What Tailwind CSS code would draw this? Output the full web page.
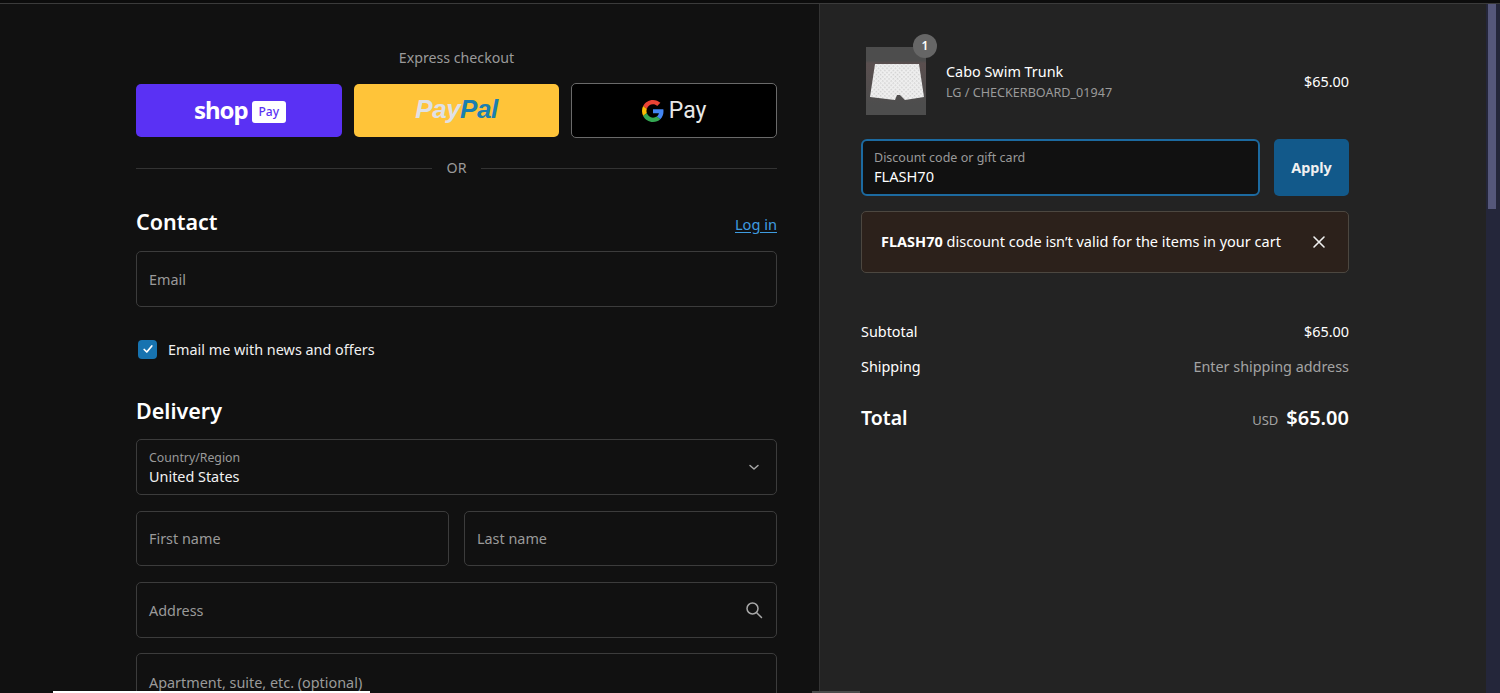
<!doctype html>
<html>
<head>
<meta charset="utf-8">
<script src="https://cdn.jsdelivr.net/npm/@tailwindcss/browser@4"></script>
</head>
<body class="bg-[#111111]">
<div class="relative h-[693px] w-[1500px] overflow-hidden font-['Noto_Sans','Open_Sans',sans-serif] text-[14.4px] text-white">
  <div class="h-1 border-b border-[#3b3b3b] bg-[#0c0c0c]"></div>
  <div class="flex h-[689px]">
    <main class="w-[820px] shrink-0 overflow-hidden border-r border-[#333333] bg-[#111111] pl-[136px] pr-[42px]">
      <p class="mt-[44px] h-5 text-center text-[14.2px] leading-5 text-[#9a9a9a]">Express checkout</p>
      <div class="mt-[15px] grid h-[55px] grid-cols-3 gap-3">
        <div class="my-px flex items-center justify-center gap-[4px] rounded-[5px] bg-[#5a31f4] pb-[1px] pl-[2px]">
          <span class="text-[24px] font-bold leading-none tracking-[-1px]">shop</span>
          <span class="mt-[3px] flex h-[22px] w-[34px] items-center justify-center rounded-[3px] bg-white text-[12px] font-medium text-[#5a31f4]">Pay</span>
        </div>
        <div class="my-px flex items-center justify-center rounded-[5px] bg-[#ffc439] pb-[3px] font-['Liberation_Sans',sans-serif] text-[26px] font-bold italic leading-none tracking-[-0.5px]">
          <span class="text-[#dfe1e6]">Pay</span><span class="text-[#1a7fb0]">Pal</span>
        </div>
        <div class="flex items-center justify-center gap-[5px] rounded-[5px] border border-[#6a6a6a] bg-black">
          <svg class="h-[22px] w-[22px]" viewBox="0 0 48 48" aria-hidden="true">
            <path fill="#EA4335" d="M24 9.5c3.5 0 6.7 1.2 9.2 3.6l6.9-6.9C35.9 2.4 30.500 0 24 0 14.600 0 6.500 5.400 2.600 13.200l8 6.200C12.400 13.700 17.700 9.500 24 9.500z"/>
            <path fill="#4285F4" d="M46.900 24.500c0-1.600-.100-3.100-.400-4.500H24v9h12.900c-.600 3-2.200 5.500-4.800 7.200l7.700 6c4.500-4.200 7.100-10.300 7.100-17.700z"/>
            <path fill="#FBBC05" d="M10.500 28.600c-.500-1.400-.800-3-.800-4.600s.300-3.200.800-4.600l-8-6.200C.900 16.500 0 20.100 0 24s.900 7.500 2.600 10.800l7.900-6.200z"/>
            <path fill="#34A853" d="M24 48c6.500 0 11.900-2.100 15.900-5.800l-7.700-6c-2.200 1.400-4.900 2.300-8.200 2.300-6.300 0-11.600-4.200-13.500-9.900l-8 6.200C6.500 42.600 14.600 48 24 48z"/>
          </svg>
          <span class="font-['Roboto',sans-serif] text-[23px] leading-none text-[#e8e8e8]">Pay</span>
        </div>
      </div>
      <div class="mt-[20px] flex h-5 items-center gap-[15px] text-[14.2px] text-[#9a9a9a]">
        <span class="h-px flex-1 bg-[#333333]"></span><span>OR</span><span class="h-px flex-1 bg-[#333333]"></span>
      </div>
      <div class="mt-[27px] flex h-[34px] items-center justify-between">
        <h2 class="text-[21.5px] font-semibold leading-none">Contact</h2>
        <a class="mt-[6px] text-[14.6px] text-[#3f9ce0] underline underline-offset-2">Log in</a>
      </div>
      <div class="mt-[12px] flex h-[56px] items-center rounded-[5px] border border-[#3c3c3c] px-[12px] pt-[2px] text-[#9a9a9a]">Email</div>
      <label class="mt-[32px] flex h-5 items-center gap-[11px] pl-[2px]">
        <span class="flex h-[19px] w-[19px] items-center justify-center rounded-[4px] bg-[#1773b0]">
          <svg class="h-3 w-3" viewBox="0 0 12 12" fill="none" stroke="white" stroke-width="1.700" stroke-linecap="round" stroke-linejoin="round" aria-hidden="true"><path d="M2.200 6.500 4.800 9l5-6"/></svg>
        </span>
        <span class="pt-[2px] text-[#f0f0f0]">Email me with news and offers</span>
      </label>
      <h2 class="mt-[40px] h-[24px] text-[21.5px] font-semibold leading-[24px]">Delivery</h2>
      <div class="mt-[16px] flex h-[56px] items-center justify-between rounded-[5px] border border-[#3c3c3c] px-[12px]">
        <div class="pt-[1px]">
          <p class="text-[12.3px] leading-[18px] text-[#9a9a9a]">Country/Region</p>
          <p class="leading-[20px] text-[#f2f2f2]">United States</p>
        </div>
        <svg class="mr-[3px] h-[14px] w-[14px]" viewBox="0 0 14 14" fill="none" stroke="#a8a8a8" stroke-width="1.500" stroke-linecap="round" stroke-linejoin="round" aria-hidden="true"><path d="M3 5.500 7 9l4-3.500"/></svg>
      </div>
      <div class="mt-[16px] grid h-[55px] grid-cols-2 gap-[15px]">
        <div class="flex items-center rounded-[5px] border border-[#3c3c3c] px-[12px] pt-[1px] text-[#9a9a9a]">First name</div>
        <div class="flex items-center rounded-[5px] border border-[#3c3c3c] px-[12px] pt-[1px] text-[#9a9a9a]">Last name</div>
      </div>
      <div class="mt-[16px] flex h-[56px] items-center justify-between rounded-[5px] border border-[#3c3c3c] pl-[12px] pr-[13px] text-[#9a9a9a]">
        <span class="pt-[2px]">Address</span>
        <svg class="h-[18px] w-[18px]" viewBox="0 0 18 18" fill="none" stroke="#a8a8a8" stroke-width="1.500" stroke-linecap="round" aria-hidden="true"><circle cx="7.500" cy="7.500" r="5.500"/><path d="m11.700 11.700 4.800 4.800"/></svg>
      </div>
      <div class="mt-[15px] flex h-[56px] items-center rounded-[5px] border border-[#3c3c3c] px-[12px] pt-[3px] text-[#9a9a9a]">Apartment, suite, etc. (optional)</div>
    </main>
    <aside class="w-[666px] shrink-0 bg-[#232323] pl-[41px] pr-[137px]">
      <div class="mt-[43px] flex h-[68px] items-center">
        <div class="relative ml-[5px] h-[68px] w-[60px] shrink-0 bg-[linear-gradient(#4d4d4d,#4d4d4d_20%,#5a4f4f_24%,#4d4d4d_85%)]">
          <svg class="absolute left-[4px] top-[16px] h-[40px] w-[54px]" viewBox="0 0 54 40" aria-hidden="true">
            <defs><pattern id="check" width="3" height="3" patternUnits="userSpaceOnUse" patternTransform="rotate(45)"><rect width="3" height="3" fill="#f0f0f0"/><rect width="1.500" height="1.500" fill="#cfcfcf"/></pattern></defs>
            <path fill="url(#check)" d="M5 1h44l5 33-19 3-3-3-2-2-3 0-2 5-25-3z"/>
          </svg>
          <span class="absolute -right-[11px] -top-[13px] flex h-[24px] w-[24px] items-center justify-center rounded-full bg-[#666666] text-[12px] font-semibold">1</span>
        </div>
        <div class="ml-[20px] flex-1 pt-[1px]">
          <p class="leading-[20px]">Cabo Swim Trunk</p>
          <p class="mt-[2px] text-[12.6px] leading-[18px] text-[#9a9a9a]">LG / CHECKERBOARD_01947</p>
        </div>
        <span class="pt-[2px]">$65.00</span>
      </div>
      <div class="mt-[24px] flex h-[57px] gap-[14px]">
        <div class="flex-1 rounded-[6px] border-2 border-[#1c6aa0] bg-[#111111] px-[11px] pt-[8px]">
          <p class="text-[12.5px] leading-[17px] text-[#9a9a9a]">Discount code or gift card</p>
          <p class="text-[14.6px] leading-[20px]">FLASH70</p>
        </div>
        <button class="w-[75px] rounded-[5px] bg-[#12598a] pt-[1px] font-bold text-[#f0f0f0]">Apply</button>
      </div>
      <div class="mt-[15px] flex h-[62px] items-center justify-between rounded-[5px] border border-[#4c4740] bg-[#2c211b] pl-[19px] pr-[22px]">
        <p class="text-[14.5px]"><strong class="font-bold">FLASH70</strong> discount code isn’t valid for the items in your cart</p>
        <svg class="h-[14px] w-[14px]" viewBox="0 0 14 14" fill="none" stroke="#f0f0f0" stroke-width="1.600" stroke-linecap="round" aria-hidden="true"><path d="m2 2 10 10M12 2 2 12"/></svg>
      </div>
      <div class="mt-[49px] flex h-5 items-center justify-between leading-5"><span>Subtotal</span><span>$65.00</span></div>
      <div class="mt-[15px] flex h-5 items-center justify-between leading-5"><span>Shipping</span><span class="text-[#a3a3a3]">Enter shipping address</span></div>
      <div class="mt-[27px] flex h-[28px] items-center justify-between">
        <span class="text-[19.5px] font-semibold">Total</span>
        <span class="flex items-baseline gap-[8px]"><span class="text-[13px] text-[#a3a3a3]">USD</span><span class="text-[20px] font-semibold">$65.00</span></span>
      </div>
    </aside>
    <div class="w-[14px] shrink-0 bg-[#24263a]">
      <div class="ml-[2px] h-[205px] w-[8px] bg-[#55577a]"></div>
    </div>
  </div>
  <div class="absolute bottom-0 left-[53px] h-[2px] w-[317px] bg-white"></div>
  <div class="absolute bottom-0 left-[812px] h-[2px] w-[48px] bg-[#4a4a4a]"></div>
</div>
</body>
</html>
